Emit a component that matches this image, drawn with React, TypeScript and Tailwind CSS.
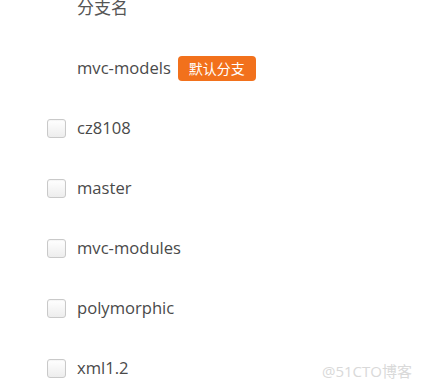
import React from "react";

const branches = ["cz8108", "master", "mvc-modules", "polymorphic", "xml1.2"];

const Checkbox: React.FC = () => (
  <span className="w-[19px] h-[19px] rounded-[3px] border border-[#c9c9c9] bg-gradient-to-b from-white to-[#ededed] shadow-[inset_0_1px_1px_rgba(0,0,0,0.04)] shrink-0" />
);

const App: React.FC = () => {
  return (
    <div
      className="w-[422px] h-[391px] bg-white overflow-hidden relative text-[16.6px] text-[#4a4a4a]"
      style={{ fontFamily: '"Open Sans", "Noto Sans", "Noto Sans CJK SC", sans-serif' }}
    >
      <div className="-mt-[22px]">
        <div className="h-[60px] flex items-center pl-[77px]">
          <span className="text-[#555] text-[17px]">分支名</span>
        </div>
        <div className="h-[60px] flex items-center pl-[77px] gap-[7px]">
          <span>mvc-models</span>
          <span className="h-[25px] px-[11px] flex items-center rounded-[4px] bg-[#f2711c] text-white text-[14px]">
            默认分支
          </span>
        </div>
        {branches.map((b) => (
          <div key={b} className="h-[60px] flex items-center pl-[47px] gap-[11px]">
            <Checkbox />
            <span>{b}</span>
          </div>
        ))}
      </div>
      <div className="absolute right-[10px] bottom-[9px] text-[15px] text-[#d9d9d9]">
        @51CTO博客
      </div>
    </div>
  );
};

export default App;
